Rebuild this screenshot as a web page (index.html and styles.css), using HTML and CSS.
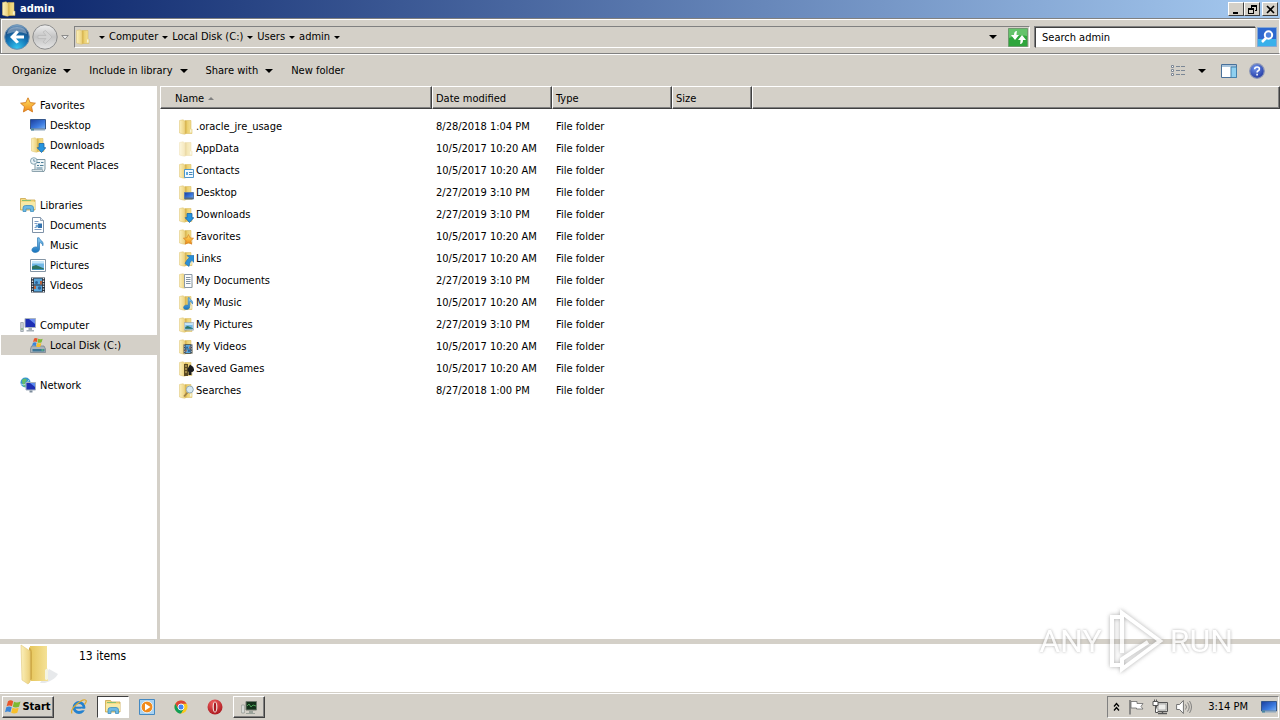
FILE: index.html
```html
<!DOCTYPE html>
<html lang="en">
<head>
  <meta charset="utf-8">
  <meta name="viewport" content="width=device-width, initial-scale=1.0">
  <title>admin</title>
  <link rel="stylesheet" href="styles.css">
</head>
<body>
  <!-- Icon sprite -->
  <svg class="sprite" aria-hidden="true">
    <defs>
      <linearGradient id="g-fold" x1="0" y1="0" x2="1" y2="0"><stop offset="0" stop-color="#fbf0bc"/><stop offset="1" stop-color="#ecd07a"/></linearGradient>
      <linearGradient id="g-fold2" x1="0" y1="0" x2="1" y2="0"><stop offset="0" stop-color="#e6c65c"/><stop offset="1" stop-color="#f5e39a"/></linearGradient>
      <linearGradient id="g-screen" x1="0" y1="0" x2="1" y2="1"><stop offset="0" stop-color="#1b3d9c"/><stop offset=".6" stop-color="#3c7be0"/><stop offset="1" stop-color="#7fb4f2"/></linearGradient>
      <linearGradient id="g-blue" x1="0" y1="0" x2="0" y2="1"><stop offset="0" stop-color="#8ccbf2"/><stop offset="1" stop-color="#1673bd"/></linearGradient>
      <linearGradient id="g-star" x1="0" y1="0" x2="0" y2="1"><stop offset="0" stop-color="#ffe566"/><stop offset="1" stop-color="#f08a18"/></linearGradient>
      <radialGradient id="g-back" cx=".5" cy=".95" r=".95"><stop offset="0" stop-color="#35c5f0"/><stop offset=".5" stop-color="#1272b4"/><stop offset=".8" stop-color="#1b4f86"/><stop offset="1" stop-color="#90b4d4"/></radialGradient>
      <linearGradient id="g-fwd" x1="0" y1="0" x2="0" y2="1"><stop offset="0" stop-color="#efefef"/><stop offset=".5" stop-color="#c4c4c4"/><stop offset="1" stop-color="#e6e6e6"/></linearGradient>
      <radialGradient id="g-help" cx=".4" cy=".3" r=".8"><stop offset="0" stop-color="#6f93ea"/><stop offset="1" stop-color="#1a2f9c"/></radialGradient>
      <radialGradient id="g-opera" cx=".4" cy=".25" r=".9"><stop offset="0" stop-color="#f06060"/><stop offset="1" stop-color="#a00c14"/></radialGradient>
    </defs>

    <symbol id="i-folder" viewBox="0 0 16 16">
      <path d="M7 1.500h6v8l1 1v4H7z" fill="url(#g-fold2)" stroke="#d6b655" stroke-width=".5"/>
      <path d="M6.500 2h1.800v12.500H6.500z" fill="#d0aa42"/>
      <path d="M1.500 1.500 5 .8l2.200 1.400v13L5 15l-3.500-1z" fill="url(#g-fold)" stroke="#dcc06c" stroke-width=".5"/>
      <path d="M12 10.500h1.500v3H12z" fill="#f6f3d8"/>
    </symbol>
    <symbol id="i-star" viewBox="0 0 16 16">
      <path d="M8 .8l2.200 4.800 5.200.6-3.900 3.500 1.100 5.200L8 12.300l-4.600 2.600 1.100-5.200L.6 6.200l5.200-.6z" fill="url(#g-star)" stroke="#d47a20" stroke-width=".9"/>
    </symbol>
    <symbol id="i-desktop" viewBox="0 0 16 16">
      <path d="M.5 2.500h15v9.500H.5z" fill="url(#g-screen)" stroke="#35578c"/>
      <path d="M1 11.500h14v2H1z" fill="#8ea7bd"/><path d="M1 11.500h3v2H1z" fill="#4a87a0"/>
    </symbol>
    <symbol id="i-arrow" viewBox="0 0 16 16">
      <path d="M9 6.500h5v4.200h1.800L11.500 15.500 7.200 10.700H9z" fill="#2595e0" stroke="#1b66a6" stroke-width=".8"/>
    </symbol>
    <symbol id="i-downloads" viewBox="0 0 16 16"><use href="#i-folder"/><use href="#i-arrow"/></symbol>
    <symbol id="i-recent" viewBox="0 0 16 16">
      <path d="M5 2.500h10v9.500l-1 2.500H3.500L5 12z" fill="#eef4f6" stroke="#7f98a3"/>
      <path d="M7 5.500h3M11 5.500h2.500M7 8.500h2M10 8.500h3.500M6.500 11h6" stroke="#4f7f99"/>
      <path d="M2 12.500h10.500v2H2z" fill="#d9e4e8" stroke="#7f98a3" stroke-width=".7"/>
      <circle cx="3.800" cy="4" r="3.300" fill="#e9f2f6" stroke="#7c9dac" stroke-width=".9"/><path d="M3.800 2v2.200h1.700" fill="none" stroke="#507a94" stroke-width=".8"/>
    </symbol>
    <symbol id="i-libraries" viewBox="0 0 16 16">
      <path d="M.5 1.500h5l1 1.500h8.500v10H.5z" fill="#f5dc84" stroke="#c9a54a" stroke-width=".8"/>
      <path d="M1 5h14v7H1z" fill="#f8eaa6"/><path d="M2 3.500h9" stroke="#86bf72"/>
      <path d="M3 14.500V11q0-2.500 2.500-2.500h5.500q2.500 0 2.500 2.500v3.500h-3V12H6v2.500z" fill="#6db9e4" stroke="#3f8fbe" stroke-width=".8"/>
    </symbol>
    <symbol id="i-doc" viewBox="0 0 16 16">
      <path d="M2.500.5h8l3 3v12h-11z" fill="#fff" stroke="#7f92a8"/><path d="M10.500.5v3h3" fill="#dce6ef" stroke="#7f92a8" stroke-width=".8"/>
      <path d="M4.500 4.500h4M4.500 6.500h3M4.500 12.500h7M4.500 10.500h2" stroke="#7d9cc4"/><path d="M8 6.500h4V11H8z" fill="#3372ae"/><circle cx="7" cy="9" r="1.500" fill="#6ea7d4"/>
    </symbol>
    <symbol id="i-music" viewBox="0 0 16 16">
      <path d="M7.500.8h1.700c.4 2.800 5.200 3.200 3.600 8-.4-2.100-1.600-3-3.300-3.200v6.900c-.4 3.600-7.800 4-7.600.4.100-2.400 3-3.500 5.600-2.700z" fill="url(#g-blue)" stroke="#2b79b5" stroke-width=".7"/>
    </symbol>
    <symbol id="i-pictures" viewBox="0 0 16 16">
      <path d="M.5 2.500h15v12H.5z" fill="#fff" stroke="#8495a5"/><path d="M2 4h12v9H2z" fill="#70b7e6"/>
      <path d="M2 4h12v2.500H2z" fill="#c7e6f8"/><path d="M2 9.500 6 8l8 3.500V13H2z" fill="#2e7460"/><path d="M2 12h12v1H2z" fill="#3d92bc"/>
    </symbol>
    <symbol id="i-videos" viewBox="0 0 16 16">
      <path d="M1 .5h14v15H1z" fill="#27313e"/><path d="M4 1.500h8v6H4zM4 8.500h8v6H4z" fill="#5aa7dc"/>
      <path d="M2.500 1v15M13.500 1v15" stroke="#dce4ea" stroke-width="1.400" stroke-dasharray="1.300 1.300"/>
      <circle cx="6.500" cy="5.500" r="1.500" fill="#2b6298"/><circle cx="9.500" cy="11" r="1.700" fill="#2b6298"/><path d="M10 4h2v3.500h-2zM4 9h2v3H4z" fill="#b9663f"/>
    </symbol>
    <symbol id="i-computer" viewBox="0 0 16 16">
      <path d="M.7 5.500h2.600v9H.7z" fill="#cfd5da" stroke="#8a949c" stroke-width=".7"/><path d="M1 12h2" stroke="#61a94c"/>
      <path d="M5 1.500h10.500v9H5z" fill="#1d2fb4" stroke="#a9b4bf"/><path d="M9 2h6v5z" fill="#6a8cf0"/><path d="M8.500 11h3.500v2h2v1.500H6.500V13h2z" fill="#a7b0b8"/>
    </symbol>
    <symbol id="i-winflag" viewBox="0 0 16 16">
      <path d="M3 2.200q2.500-1.700 5.200 0L7 7.300q-2.700-1.500-5.400 0z" fill="#e8562a"/><path d="M9 2.700q2.900 1.500 6.500-.3l-1.500 5.300q-3.200 1.600-6.200.1z" fill="#7db932"/>
      <path d="M1.300 8.300q2.800-1.500 5.400 0L5.400 13.300q-2.700-1.600-5.400 0z" fill="#3a86d8"/><path d="M7.500 8.800q3 1.400 6.200-.1l-1.400 5.100q-3.200 1.500-6.100 0z" fill="#f7bf2b"/>
    </symbol>
    <symbol id="i-disk" viewBox="0 0 16 16">
      <path d="M1.500 9h12.500l1.500 3v3.500H.5V12z" fill="#a9b3bb" stroke="#717d86" stroke-width=".7"/><path d="M2.500 12h12v2.500h-12z" fill="#3d7696"/><path d="M11.500 13h2" stroke="#6ce06c"/>
      <use href="#i-winflag" x="2" y="0" width="11" height="11"/>
    </symbol>
    <symbol id="i-network" viewBox="0 0 16 16">
      <circle cx="5.500" cy="5.500" r="5" fill="#3596d0"/><path d="M2 3q3-3 5 0l-2 3 1 3-2 1Q2 7 2 3z" fill="#65bd6b"/><path d="M1 7q4 3 8-4" fill="none" stroke="#c9e9f8" stroke-width=".8"/>
      <path d="M6 5.500h9.500v7.500H6z" fill="#1d2fb4" stroke="#a5b1c0"/><path d="M10 6h5v4z" fill="#5a8aef"/><path d="M9.500 13.500h3v2h-3z" fill="#7d8c9c"/>
    </symbol>

    <!-- Folders with an overlay in the lower right corner -->
    <symbol id="i-contacts" viewBox="0 0 16 16"><use href="#i-folder"/><path d="M6.500 6.500h9v8h-9z" fill="#f2faff" stroke="#4f96ca"/><path d="M8 9h2v3H8z" fill="#5da9de"/><path d="M11 9.500h3.500M11 11.500h3.500" stroke="#4c87b5"/></symbol>
    <symbol id="i-fdesktop" viewBox="0 0 16 16"><use href="#i-folder"/><path d="M6.500 7.500h9V14h-9z" fill="url(#g-screen)" stroke="#5c7da8"/><path d="M7 12.500h8V14H7z" fill="#566b80"/></symbol>
    <symbol id="i-favorites" viewBox="0 0 16 16"><use href="#i-folder"/><use href="#i-star" x="5" y="5" width="11" height="11"/></symbol>
    <symbol id="i-links" viewBox="0 0 16 16"><use href="#i-folder"/><path d="M9 4.500h7v7l-2.200-2.200q-2.300 2-2.800 6.200L7 12.500q1.300-3.500 4.200-5.800z" fill="#2a8fd6" stroke="#1e6cab" stroke-width=".6"/></symbol>
    <symbol id="i-fdoc" viewBox="0 0 16 16"><use href="#i-folder"/><path d="M6.500 1.500H14v13H6.500z" fill="#fafcfd" stroke="#8a98a5"/><path d="M8 4.500h4.500M8 6.500h4.500M8 8.500h4.500M8 10.500h4.500" stroke="#8293a3"/></symbol>
    <symbol id="i-fmusic" viewBox="0 0 16 16"><use href="#i-folder"/><use href="#i-music" x="4" y="2" width="13" height="13"/></symbol>
    <symbol id="i-fpictures" viewBox="0 0 16 16"><use href="#i-folder"/><use href="#i-pictures" x="6" y="4" width="10" height="10"/></symbol>
    <symbol id="i-fvideos" viewBox="0 0 16 16"><use href="#i-folder"/><use href="#i-videos" x="5" y="5" width="10" height="10"/></symbol>
    <symbol id="i-games" viewBox="0 0 16 16"><use href="#i-folder"/><path d="M6 3h4v12H6z" fill="#5c4b22"/><path d="M7 5h2M7 8h2M7 11h2" stroke="#e0c671"/><path d="M12 3.500q4.500 2.500 4 6-1.500 2-2.500 1.500v3h-3v-3Q9 9.500 10 7z" fill="#1c1c1e"/></symbol>
    <symbol id="i-searches" viewBox="0 0 16 16"><use href="#i-folder"/><path d="m10 9-4 4.500" stroke="#a08246" stroke-width="1.800"/><circle cx="11.800" cy="6.500" r="3.500" fill="#d6e9f3" stroke="#93a9b5"/></symbol>
  </svg>

  <header class="title-bar">
    <svg class="icon"><use href="#i-folder"/></svg>
    <h1 class="title">admin</h1>
    <div class="window-buttons">
      <button class="win-btn" aria-label="Minimize"><svg width="9" height="9"><path d="M1 7h5v2H1z"/></svg></button>
      <button class="win-btn" aria-label="Restore"><svg width="9" height="9"><path d="M3 0h6v6H7V5h1V2H4v1H3zM0 3h6v6H0zm1 2v3h4V5z" fill-rule="evenodd"/></svg></button>
      <button class="win-btn close" aria-label="Close"><svg width="9" height="9"><path d="m1 1 7 7M8 1 1 8" stroke="#000" stroke-width="1.600"/></svg></button>
    </div>
  </header>

  <div class="nav-bar">
    <button class="round-btn" aria-label="Back">
      <svg viewBox="0 0 26 26"><circle cx="13" cy="13" r="12.300" fill="url(#g-back)" stroke="#6a8fb0"/><path d="M3 10q1-7 10-7t10 7q-10-4-20 0z" fill="#fff" opacity=".35"/><path d="M20 11.500h-8l3-3.500-2.500-1.500L6 13l6.500 6.500L15 18l-3-3.500h8z" fill="#fff"/></svg>
    </button>
    <button class="round-btn" aria-label="Forward">
      <svg viewBox="0 0 26 26"><circle cx="13" cy="13" r="12.200" fill="url(#g-fwd)" stroke="#8c8c8c"/><path d="M6 11.500h8l-3-3.500 2.500-1.500L20 13l-6.500 6.500L11 18l3-3.500H6z" fill="#d2d2d2" stroke="#b3b3b3" stroke-width=".6"/></svg>
    </button>
    <button class="recent-btn" aria-label="Recent pages"><svg width="8" height="5"><path d="M.8.5h6.400L4 4.200z" fill="#eee" stroke="#777" stroke-width=".8"/></svg></button>
    <nav class="address" aria-label="Address">
      <svg class="icon"><use href="#i-folder"/></svg>
      <div class="crumbs">
        <span class="small-arrow"></span>
        <a href="#">Computer</a><span class="small-arrow"></span>
        <a href="#">Local Disk (C:)</a><span class="small-arrow"></span>
        <a href="#">Users</a><span class="small-arrow"></span>
        <a href="#">admin</a><span class="small-arrow"></span>
      </div>
      <button class="history-btn" aria-label="Previous locations"><span class="arrow"></span></button>
      <button class="refresh" aria-label="Refresh">
        <svg width="20" height="19"><path d="M.5.500h19v18H.5z" fill="#2fa63c" stroke="#6f9a6f"/><path d="M1 1h18v7Q10 6 1 10z" fill="#7cd07f" opacity=".7"/><path d="M9 3q-3 0-3 4H3l4 5 4-5H8.500q0-2 .5-4z" fill="#fff"/><path d="M12 16q3 0 3-4h3l-4-5-4 5h2.500q0 2-.5 4z" fill="#fff"/></svg>
      </button>
    </nav>
    <form class="search">
      <input type="text" class="search-input" aria-label="Search admin" placeholder="Search admin">
      <button type="button" class="search-btn" aria-label="Search">
        <svg width="20" height="20"><path d="M.5.500h19v19H.5z" fill="#2c68cf" stroke="#86a8d4"/><path d="M1 12h18v7H1z" fill="#39b0ea"/><path d="m9 11-4 4" stroke="#fff" stroke-width="2.500"/><circle cx="11.500" cy="8" r="3.700" fill="#4d83dd" stroke="#fff" stroke-width="2"/></svg>
      </button>
    </form>
  </div>

  <div class="toolbar">
    <button class="tool">Organize <span class="arrow"></span></button>
    <button class="tool">Include in library <span class="arrow"></span></button>
    <button class="tool">Share with <span class="arrow"></span></button>
    <button class="tool">New folder</button>
    <div class="view-tools">
      <button class="tool" aria-label="Change your view">
        <svg width="16" height="14"><path d="M1.500 1.500h2v2h-2zM1.500 5.500h2v2h-2zM1.500 9.500h2v2h-2z" fill="#fff" stroke="#7d8794"/><path d="M6 2.500h4M11 2.500h4M6 6.500h4M11 6.500h4M6 10.500h4M11 10.500h4" stroke="#7b8795"/></svg>
      </button>
      <button class="tool" aria-label="More view options"><span class="arrow"></span></button>
      <button class="tool preview" aria-label="Show the preview pane">
        <svg width="16" height="14"><path d="M.5.500h15v13H.5z" fill="#fff" stroke="#48709a"/><path d="M1 1h14v2H1z" fill="#a8c4dc"/><path d="M10 3h5.500v10.500H10z" fill="#8fd0f0" stroke="#4682ac"/></svg>
      </button>
      <button class="tool help" aria-label="Get help">
        <svg width="16" height="16"><circle cx="8" cy="8" r="7.300" fill="url(#g-help)" stroke="#8b96b8" stroke-width="1.200"/><path d="M5.600 6.200Q5.800 4 8.100 4t2.300 2q0 1.100-1.200 1.700T8.100 9.500M8.100 10.800v1.600" fill="none" stroke="#fff" stroke-width="1.600"/></svg>
      </button>
    </div>
  </div>

  <main class="explorer">
    <aside class="sidebar">
      <ul class="tree">
        <li><a href="#" class="node root"><svg class="icon"><use href="#i-star"/></svg><span class="label">Favorites</span></a></li>
        <li><a href="#" class="node"><svg class="icon"><use href="#i-desktop"/></svg><span class="label">Desktop</span></a></li>
        <li><a href="#" class="node"><svg class="icon"><use href="#i-downloads"/></svg><span class="label">Downloads</span></a></li>
        <li><a href="#" class="node"><svg class="icon"><use href="#i-recent"/></svg><span class="label">Recent Places</span></a></li>
      </ul>
      <ul class="tree">
        <li><a href="#" class="node root"><svg class="icon"><use href="#i-libraries"/></svg><span class="label">Libraries</span></a></li>
        <li><a href="#" class="node"><svg class="icon"><use href="#i-doc"/></svg><span class="label">Documents</span></a></li>
        <li><a href="#" class="node"><svg class="icon"><use href="#i-music"/></svg><span class="label">Music</span></a></li>
        <li><a href="#" class="node"><svg class="icon"><use href="#i-pictures"/></svg><span class="label">Pictures</span></a></li>
        <li><a href="#" class="node"><svg class="icon"><use href="#i-videos"/></svg><span class="label">Videos</span></a></li>
      </ul>
      <ul class="tree">
        <li><a href="#" class="node root"><svg class="icon"><use href="#i-computer"/></svg><span class="label">Computer</span></a></li>
        <li><a href="#" class="node selected"><svg class="icon"><use href="#i-disk"/></svg><span class="label">Local Disk (C:)</span></a></li>
      </ul>
      <ul class="tree">
        <li><a href="#" class="node root"><svg class="icon"><use href="#i-network"/></svg><span class="label">Network</span></a></li>
      </ul>
    </aside>

    <section class="files">
      <table class="file-table">
        <thead>
          <tr>
            <th class="col-name">Name <span class="sort-arrow"></span></th>
            <th class="col-date">Date modified</th>
            <th class="col-type">Type</th>
            <th class="col-size">Size</th>
            <th class="col-rest"></th>
          </tr>
        </thead>
        <tbody>
          <tr class="gap"><td colspan="5"></td></tr>
          <tr><td><div class="file"><svg class="icon"><use href="#i-folder"/></svg>.oracle_jre_usage</div></td><td>8/28/2018 1:04 PM</td><td>File folder</td><td></td><td></td></tr>
          <tr><td><div class="file"><svg class="icon hidden-item"><use href="#i-folder"/></svg>AppData</div></td><td>10/5/2017 10:20 AM</td><td>File folder</td><td></td><td></td></tr>
          <tr><td><div class="file"><svg class="icon"><use href="#i-contacts"/></svg>Contacts</div></td><td>10/5/2017 10:20 AM</td><td>File folder</td><td></td><td></td></tr>
          <tr><td><div class="file"><svg class="icon"><use href="#i-fdesktop"/></svg>Desktop</div></td><td>2/27/2019 3:10 PM</td><td>File folder</td><td></td><td></td></tr>
          <tr><td><div class="file"><svg class="icon"><use href="#i-downloads"/></svg>Downloads</div></td><td>2/27/2019 3:10 PM</td><td>File folder</td><td></td><td></td></tr>
          <tr><td><div class="file"><svg class="icon"><use href="#i-favorites"/></svg>Favorites</div></td><td>10/5/2017 10:20 AM</td><td>File folder</td><td></td><td></td></tr>
          <tr><td><div class="file"><svg class="icon"><use href="#i-links"/></svg>Links</div></td><td>10/5/2017 10:20 AM</td><td>File folder</td><td></td><td></td></tr>
          <tr><td><div class="file"><svg class="icon"><use href="#i-fdoc"/></svg>My Documents</div></td><td>2/27/2019 3:10 PM</td><td>File folder</td><td></td><td></td></tr>
          <tr><td><div class="file"><svg class="icon"><use href="#i-fmusic"/></svg>My Music</div></td><td>10/5/2017 10:20 AM</td><td>File folder</td><td></td><td></td></tr>
          <tr><td><div class="file"><svg class="icon"><use href="#i-fpictures"/></svg>My Pictures</div></td><td>2/27/2019 3:10 PM</td><td>File folder</td><td></td><td></td></tr>
          <tr><td><div class="file"><svg class="icon"><use href="#i-fvideos"/></svg>My Videos</div></td><td>10/5/2017 10:20 AM</td><td>File folder</td><td></td><td></td></tr>
          <tr><td><div class="file"><svg class="icon"><use href="#i-games"/></svg>Saved Games</div></td><td>10/5/2017 10:20 AM</td><td>File folder</td><td></td><td></td></tr>
          <tr><td><div class="file"><svg class="icon"><use href="#i-searches"/></svg>Searches</div></td><td>8/27/2018 1:00 PM</td><td>File folder</td><td></td><td></td></tr>
        </tbody>
      </table>
    </section>
  </main>

  <footer class="details">
    <svg class="big-folder" viewBox="0 0 40 42">
      <path d="M20 39 29 25l9 5q-3 6-13 9z" fill="#b9c1c6" opacity=".35"/>
      <path d="M10 2h17v22l1 3v10H11z" fill="url(#g-fold2)"/>
      <path d="M9 3q3 2 3 6v26l-3 3z" fill="#d0ab48"/>
      <path d="M1 1 10 7v31l-2 2-6-4z" fill="url(#g-fold)" stroke="#e0c878" stroke-width=".6"/>
      <path d="M25 26q3-3 3 1v8q-2 2-3 0z" fill="#f4f4e2"/>
    </svg>
    <span>13 items</span>
  </footer>

  <!-- Watermark -->
  <div class="watermark">
    <span>ANY</span>
    <svg width="60" height="64" viewBox="0 0 60 64" fill="none" stroke="#fff" stroke-width="4">
      <path d="M15 56H6V8h9"/><path d="M16 44V4l38 28-38 28V50l26-17"/><path d="M16 14v30"/>
    </svg>
    <span>RUN</span>
  </div>

  <div class="taskbar">
    <button class="start"><svg class="icon"><use href="#i-winflag"/></svg>Start</button>
    <div class="tasks">
      <button class="task" aria-label="Internet Explorer"><svg class="icon" viewBox="0 0 16 16"><circle cx="8" cy="8.500" r="5" fill="none" stroke="#2381cf" stroke-width="2.800"/><path d="M4 8.700h9.500" stroke="#2381cf" stroke-width="2"/><path d="M10 10.500h5" stroke="#d4d0c8" stroke-width="1.600"/><path d="M1 14.500Q-1 11 6 5t9-3.500q1 1-1.500 4" fill="none" stroke="#dda92e" stroke-width="1.200"/></svg></button>
      <button class="task active" aria-label="Windows Explorer"><svg class="icon" viewBox="0 0 16 16"><use href="#i-libraries"/></svg></button>
      <button class="task" aria-label="Media Player"><svg class="icon" viewBox="0 0 16 16"><path d="M.5.500h15v15H.5z" fill="#a9d2f1" stroke="#4489c2"/><circle cx="8" cy="8" r="5.800" fill="#f08a1c" stroke="#fff" stroke-width=".7"/><path d="m6 4.500 5.500 3.500L6 11.500z" fill="#fff"/></svg></button>
      <button class="task" aria-label="Chrome"><svg class="icon" viewBox="0 0 16 16"><circle cx="8" cy="8" r="6.500" fill="#fac81e"/><path d="M2.300 4.800A6.500 6.500 0 0 1 13.700 4.800H8L5.200 9.700z" fill="#db4437"/><path d="M2.300 4.800 5.200 9.700l5.600 0L8 14.500A6.500 6.500 0 0 1 2.300 4.800z" fill="#0f9d58"/><circle cx="8" cy="8" r="3" fill="#4285f4" stroke="#fff" stroke-width=".9"/></svg></button>
      <button class="task" aria-label="Opera"><svg class="icon" viewBox="0 0 16 16"><circle cx="8" cy="8" r="7.500" fill="url(#g-opera)"/><ellipse cx="8" cy="8" rx="2.400" ry="5.500" fill="#f0e6e0"/><ellipse cx="8" cy="8" rx="1.200" ry="4.800" fill="#a81820"/></svg></button>
      <button class="task raised" aria-label="Remote computer"><svg class="icon" viewBox="0 0 16 16"><path d="M5 2.500h10.500V11H5z" fill="#12301a" stroke="#70796f"/><path d="m6 7 2-2 2 3 2-2 3 1" fill="none" stroke="#4a9c55"/><path d="M.7 6h2.600v8H.7z" fill="#e6e8e6" stroke="#8a918a" stroke-width=".7"/><path d="M8 12h4v2H8zM5 14h9v1H5z" fill="#9aa29a"/></svg></button>
    </div>
    <div class="tray">
      <button class="tray-btn" aria-label="Show hidden icons"><svg width="7" height="10"><path d="m1 4.500 2.500-3 2.500 3M1 8.500l2.500-3 2.500 3" fill="none" stroke="#000" stroke-width="1.300"/></svg></button>
      <button class="tray-btn" aria-label="Action Center"><svg class="icon" viewBox="0 0 16 16"><path d="M2 1v14.500" stroke="#707070" stroke-width="1.500"/><path d="M3 2.500h6v2h6l-2 3 2 2.500H8.500V9H3z" fill="#fff" stroke="#6a6a6a" stroke-width=".8"/></svg></button>
      <button class="tray-btn" aria-label="Network"><svg class="icon" viewBox="0 0 16 16"><path d="M4.500 3.500h11v9h-11z" fill="#d4d4d0" stroke="#555"/><path d="M6 5h8v6H6z" fill="#ededea" stroke="#888" stroke-width=".6"/><path d="M6 14.500h9M10.500 12v2" stroke="#555" stroke-width="1.400"/><path d="M1 2.500h5v4H1zM2.500.5v2M4.500.5v2M3.500 6.500v7H6" fill="#fff" stroke="#555"/></svg></button>
      <button class="tray-btn" aria-label="Volume"><svg class="icon" viewBox="0 0 16 16"><path d="M.6 5.500h3l3.800-4v13l-3.800-4h-3z" fill="#fff" stroke="#666" stroke-width=".9"/><path d="M9.500 5.500q2 2.500 0 5M11.500 3.500q3.500 4.500 0 9M13.500 2q4 6 0 12" fill="none" stroke="#777" stroke-width=".9"/></svg></button>
      <time class="clock">3:14 PM</time>
      <button class="tray-btn" aria-label="Show desktop"><svg class="icon" viewBox="0 0 16 16"><use href="#i-desktop"/></svg></button>
    </div>
  </div>
</body>
</html>
```
FILE: styles.css
```css
* {
  box-sizing: border-box;
}

body {
  margin: 0;
  height: 100vh;
  display: flex;
  flex-direction: column;
  overflow: hidden;
  position: relative;
  background: #d4d0c8;
  color: #000;
  font: 11px/14px "DejaVu Sans Condensed", "DejaVu Sans", sans-serif;
}

button,
input {
  font: inherit;
  color: inherit;
}

button {
  display: flex;
  align-items: center;
  justify-content: center;
  padding: 0;
  border: 0;
  background: none;
}

a {
  color: inherit;
  text-decoration: none;
}

svg {
  display: block;
  flex: none;
}

.sprite {
  position: absolute;
  width: 0;
  height: 0;
}

.icon {
  width: 16px;
  height: 16px;
}

.arrow {
  border: 4px solid transparent;
  border-top-color: #000;
  border-bottom: 0;
}

.small-arrow {
  border: 3px solid transparent;
  border-top-color: #000;
  border-bottom: 0;
}

/* Title bar */
.title-bar {
  display: flex;
  align-items: center;
  gap: 3px;
  height: 18px;
  padding: 0 2px 0 1px;
  background: linear-gradient(to right, #0a246a, #a6caf0);
}

.title {
  margin: 0;
  color: #fff;
  font-size: 11px;
  font-weight: bold;
}

.window-buttons {
  display: flex;
  margin-left: auto;
}

.win-btn {
  width: 16px;
  height: 14px;
  background: #d4d0c8;
  border: 1px solid;
  border-color: #fff #404040 #404040 #fff;
}

.close {
  margin-left: 2px;
}

/* Back, forward, address and search */
.nav-bar {
  display: flex;
  align-items: center;
  height: 36px;
  padding: 2px 2px 0 3px;
  border: 1px solid #808080;
  border-right-color: #fff;
  box-shadow: inset 1px 1px #fff, 0 1px #fff;
}

.round-btn {
  width: 26px;
  height: 26px;
  margin-right: 2px;
}

.round-btn svg {
  width: 26px;
  height: 26px;
}

.recent-btn {
  width: 9px;
  margin-right: 5px;
}

.address {
  flex: 1;
  display: flex;
  align-items: center;
  height: 22px;
  border: 1px solid;
  border-color: #808080 #fff #fff #808080;
}

.crumbs {
  flex: 1;
  display: flex;
  align-items: center;
  gap: 4px;
  padding-left: 8px;
}

.history-btn {
  width: 24px;
  height: 20px;
  margin-right: 3px;
}

.refresh {
  margin-right: 1px;
}

.search {
  display: flex;
  align-items: center;
  width: 242px;
  margin-left: 5px;
}

.search-input {
  flex: 1;
  min-width: 0;
  height: 21px;
  padding: 0 6px;
  background: #fff;
  border: 1px solid;
  border-color: #404040 #d4d0c8 #d4d0c8 #404040;
  box-shadow: -1px -1px #808080;
  outline: 0;
}

.search-input::placeholder {
  color: #000;
  opacity: 1;
}

.search-btn {
  margin-left: 1px;
}

/* Command bar */
.toolbar {
  display: flex;
  align-items: center;
  gap: 18px;
  height: 32px;
  padding: 1px 15px 0 12px;
}

.tool {
  gap: 7px;
}

.view-tools {
  display: flex;
  align-items: center;
  gap: 12px;
  margin-left: auto;
}

.preview {
  margin-left: 3px;
}

/* Folder tree and file list */
.explorer {
  flex: 1;
  display: flex;
  min-height: 0;
  background: #fff;
  border-bottom: 5px solid #d4d0c8;
}

.sidebar {
  width: 160px;
  padding: 9px 0 0 1px;
  border-right: 3px solid #d4d0c8;
}

.tree {
  margin: 0 0 20px;
  padding: 0;
  list-style: none;
}

.node {
  display: flex;
  align-items: center;
  gap: 4px;
  height: 20px;
  padding-left: 29px;
}

.root {
  padding-left: 19px;
}

.label {
  padding-top: 2px;
}

.selected {
  background: #d4d0c8;
}

.files {
  flex: 1;
}

.file-table {
  width: 100%;
  table-layout: fixed;
  border-collapse: separate;
  border-spacing: 0;
}

.file-table th {
  height: 23px;
  padding: 2px 3px 0;
  background: #d4d0c8;
  border: 1px solid;
  border-color: #fff #404040 #404040 #fff;
  box-shadow: inset -1px -1px #808080;
  font-weight: normal;
  text-align: left;
}

.file-table .col-name {
  width: 272px;
  padding-left: 14px;
}

.col-date,
.col-type {
  width: 120px;
}

.col-size {
  width: 80px;
}

.sort-arrow {
  display: inline-block;
  margin-left: 1px;
  vertical-align: middle;
  border: 3px solid transparent;
  border-top: 0;
  border-bottom-color: #808080;
}

.file-table td {
  height: 22px;
  padding: 2px 4px 0;
}

.file-table .gap td {
  height: 6px;
  padding: 0;
}

.file {
  display: flex;
  align-items: center;
  gap: 2px;
  padding-left: 14px;
}

.hidden-item {
  opacity: 0.5;
}

/* Details pane */
.details {
  display: flex;
  align-items: flex-start;
  gap: 19px;
  height: 48px;
  padding-left: 20px;
  background: #fff;
  font-size: 12px;
  line-height: 24px;
}

.big-folder {
  width: 40px;
  height: 42px;
}

.watermark {
  position: absolute;
  right: 47px;
  bottom: 47px;
  display: flex;
  align-items: center;
  gap: 4px;
  color: #fff;
  font: 32px/64px "Roboto", "Liberation Sans", sans-serif;
  text-shadow: 0 0 3px #999;
  opacity: 0.8;
  pointer-events: none;
}

.watermark svg {
  filter: drop-shadow(0 0 2px #999);
}

/* Taskbar */
.taskbar {
  display: flex;
  align-items: center;
  height: 28px;
  padding: 1px 1px 0 2px;
  background: #d4d0c8;
  border-top: 1px solid #d4d0c8;
  box-shadow: inset 0 1px #fff;
}

.start,
.raised {
  height: 22px;
  border: 1px solid;
  border-color: #fff #404040 #404040 #fff;
  box-shadow: inset -1px -1px #808080;
}

.start {
  gap: 1px;
  width: 52px;
  font-weight: bold;
}

.tasks {
  display: flex;
  align-items: center;
  gap: 2px;
  margin-left: 9px;
}

.task {
  width: 32px;
  height: 22px;
}

.active {
  background: #fff;
  border: 1px solid;
  border-color: #404040 #fff #fff #404040;
}

.tray {
  display: flex;
  align-items: center;
  gap: 8px;
  height: 22px;
  margin-left: auto;
  padding: 0 1px 0 5px;
  border: 1px solid;
  border-color: #808080 #fff #fff #808080;
}

.clock {
  margin: 0 5px 0 8px;
}
```
